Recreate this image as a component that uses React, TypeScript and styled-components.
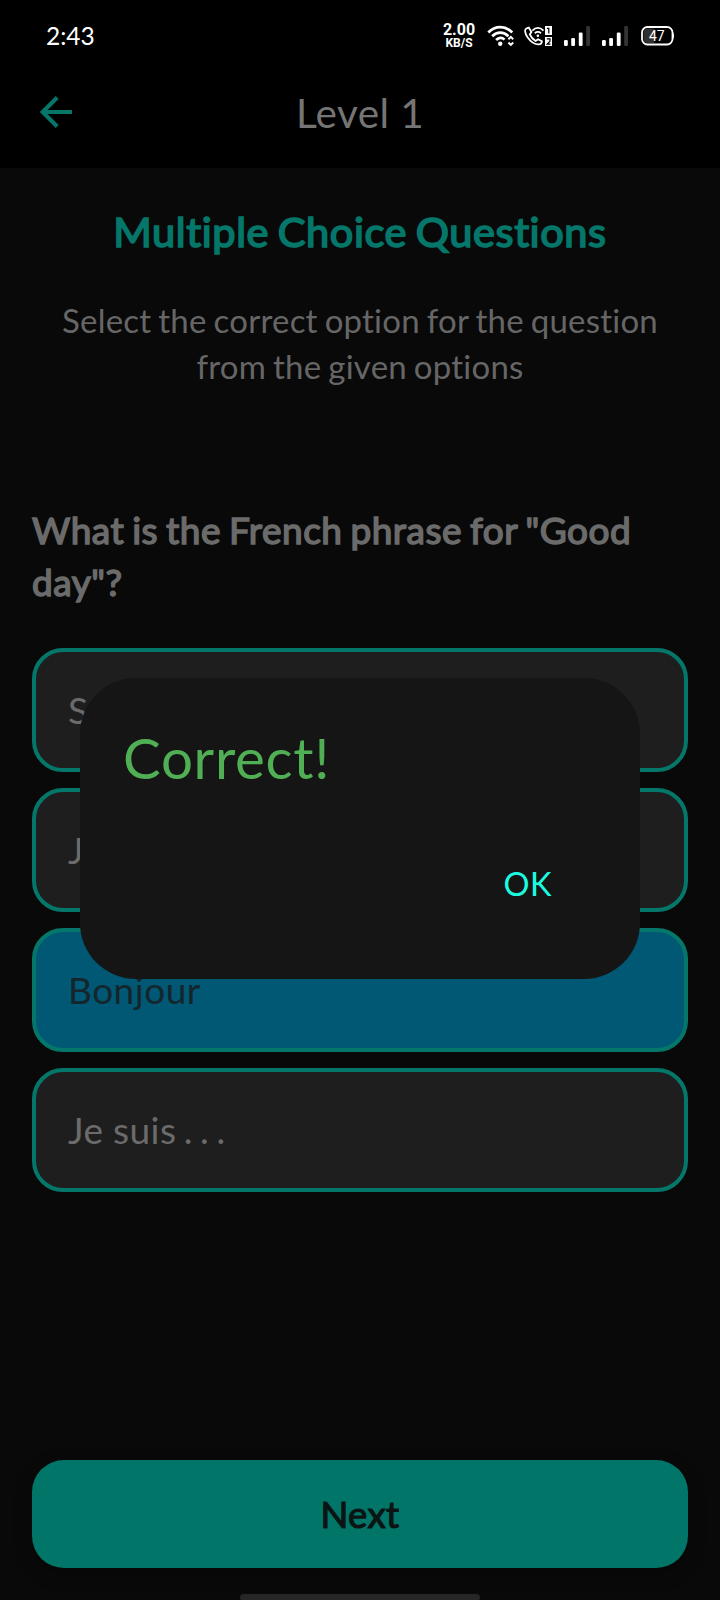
import React from 'react';
import styled, { createGlobalStyle } from 'styled-components';

const GlobalStyle = createGlobalStyle`
  *, *::before, *::after { box-sizing: border-box; }
  body { margin: 0; background: #090909; }
`;

const Screen = styled.div`
  position: relative;
  display: flex;
  flex-direction: column;
  width: 720px;
  height: 1600px;
  overflow: hidden;
  background: #090909;
  font-family: Lato, sans-serif;
  font-variant-ligatures: none;
`;

const StatusBar = styled.header`
  display: flex;
  align-items: center;
  justify-content: space-between;
  height: 72px;
  padding: 0 45px 0 46px;
  background: #000;
  color: #fff;
`;

const Clock = styled.time`
  font-size: 24.5px;
  line-height: 30px;
`;

const StatusIcons = styled.div`
  display: flex;
  align-items: center;
  height: 30px;

  svg { display: block; flex: none; }
`;

const NetSpeed = styled.div`
  display: flex;
  flex-direction: column;
  align-items: center;
  width: 34px;
  margin-right: 11px;
  font-family: Roboto, sans-serif;
  font-weight: 700;
`;

const SpeedValue = styled.span`
  font-size: 16px;
  line-height: 14px;
`;

const SpeedUnit = styled.span`
  font-size: 12px;
  line-height: 12px;
`;

const AppBar = styled.nav`
  display: grid;
  grid-template-columns: 72px 1fr 72px;
  align-items: center;
  height: 96px;
  padding-bottom: 16px;
  background: #000;
`;

const BackButton = styled.button`
  display: flex;
  padding: 0 0 0 40px;
  border: 0;
  background: none;
`;

const BarTitle = styled.h1`
  margin: 0;
  padding-top: 2px;
  text-align: center;
  font-size: 40.5px;
  font-weight: 400;
  line-height: 48px;
  letter-spacing: 0.4px;
  color: #757575;
`;

const Content = styled.main`
  display: flex;
  flex: 1;
  flex-direction: column;
  padding: 39px 32px 32px;
`;

const Title = styled.h2`
  margin: 0;
  text-align: center;
  font-size: 41.5px;
  font-weight: 400;
  line-height: 48px;
  letter-spacing: 0.6px;
  word-spacing: -2.5px;
  color: #04776a;
  -webkit-text-stroke: 1.7px #04776a;
`;

const Intro = styled.p`
  margin: 42px 0 0;
  text-align: center;
  font-size: 33px;
  line-height: 46px;
  letter-spacing: 0.22px;
  word-spacing: -1.7px;
  color: #666;
`;

const Question = styled.h3`
  margin: 115px 0 0;
  font-size: 37px;
  font-weight: 400;
  line-height: 52px;
  letter-spacing: 0.5px;
  word-spacing: -2px;
  color: #6b6b6b;
  -webkit-text-stroke: 1.5px #6b6b6b;
`;

const Options = styled.div`
  display: flex;
  flex-direction: column;
  gap: 16px;
  margin-top: 40px;
`;

const Option = styled.button<{ $selected?: boolean }>`
  display: flex;
  align-items: center;
  height: 124px;
  padding: 0 32px;
  border: 4px solid #04776a;
  border-radius: 31px;
  background: ${(p) => (p.$selected ? '#005874' : '#1e1e1e')};
  color: ${(p) => (p.$selected ? '#14262c' : '#6b6b6b')};
  font-family: inherit;
  font-size: 37px;
  line-height: 44px;
  letter-spacing: 0.5px;
  word-spacing: -0.5px;
  white-space: pre;
`;

const Ellipsis = styled.span`
  word-spacing: -2.8px;
`;

const NextButton = styled.button`
  height: 108px;
  margin-top: auto;
  border: 0;
  border-radius: 32px;
  background: #017668;
  box-shadow: 0 6px 18px rgba(0, 0, 0, 0.25);
  color: #0b1413;
  font-family: inherit;
  font-size: 36.5px;
  line-height: 44px;
  letter-spacing: 0.4px;
  -webkit-text-stroke: 1.2px #0b1413;
`;

const HomeIndicator = styled.div`
  position: absolute;
  bottom: 0;
  left: 240px;
  width: 240px;
  height: 6px;
  border-radius: 4px 4px 2px 2px;
  background: #262626;
`;

const Overlay = styled.div`
  position: absolute;
  inset: 56px 0 0;
  display: flex;
  align-items: center;
  justify-content: center;
`;

const Dialog = styled.section`
  display: flex;
  flex-direction: column;
  justify-content: space-between;
  width: 560px;
  height: 301px;
  padding: 45px 72px 73px 43px;
  border-radius: 56px;
  background: #151515;
`;

const DialogTitle = styled.h2`
  margin: 0;
  font-size: 56.5px;
  font-weight: 400;
  line-height: 68px;
  letter-spacing: 0.7px;
  color: #50af54;
`;

const DialogAction = styled.button`
  align-self: flex-end;
  padding: 0 16px;
  border: 0;
  background: none;
  color: #1cfbe0;
  font-family: inherit;
  font-size: 32.5px;
  line-height: 44px;
  letter-spacing: 0.5px;
`;

const WifiIcon = () => (
  <svg width="28" height="22" viewBox="0 0 28 22" fill="none" stroke="#fff" strokeWidth="2.7">
    <path d="M1.3 7.5C8.2 .2 18.3 .2 25.2 7.5M5.2 11.3c4.8-4.8 11.4-4.8 16.2 0M9.1 15c2.7-2.7 6-2.7 8.4-.4" />
    <circle cx="13.2" cy="18.7" r="2.2" fill="#fff" stroke="none" />
    <path d="M21.4 14.3l2.4-2.4 2.4 2.4M21.4 17.5l2.4 2.4 2.4-2.4" strokeWidth="2" />
  </svg>
);

const CallWifiIcon = () => (
  <svg width="28" height="20" viewBox="0 0 28 20" fill="none" stroke="#fff" strokeWidth="1.8">
    <path d="M4.8 1.6L2.6 2.3C.2 3 .9 7.5 3.5 11.2c3.2 4.5 7.4 7.3 11.2 7.2 2 0 3.1-1.4 3.2-3.2l-3.8-2-2.5 1.8c-2.7-1.7-4.7-3.900-5.800-6.600l1.600-2.400z" />
    <path d="M8.300 4.600c3.600-3.500 7.600-3.500 11.200 0M10.800 7.200c2.100-1.700 4.100-1.700 6.200 0" />
    <circle cx="13.9" cy="9.7" r="1.3" fill="#fff" stroke="none" />
    <path d="M21 0h7v9h-7zM21 11h7v9h-7z" fill="#fff" stroke="none" />
    <path d="M23 2.400h1.800v5M22.800 12.800h3.200v2.400l-2.800 3h3.300" stroke="#000" strokeWidth="1.2" />
  </svg>
);

const SignalIcon = () => (
  <svg width="26" height="20" viewBox="0 0 26 20" fill="#fff">
    <rect y="14" width="3.8" height="6" rx="1.3" />
    <rect x="7.2" y="12" width="3.8" height="8" rx="1.3" />
    <rect x="14.8" y="6.5" width="3.8" height="13.5" rx="1.3" />
    <rect x="22.2" width="3.8" height="20" rx="1.3" fill="#333" />
  </svg>
);

const BatteryIcon = () => (
  <svg width="34" height="20" viewBox="0 0 34 20">
    <rect x="1" y="1" width="30.5" height="17.5" rx="5.5" fill="#000" stroke="#fff" strokeWidth="1.8" />
    <path d="M7 2.500h6v14.500H7q-4.500 0-4.500-4.500v-5.500q0-4.500 4.500-4.500z" fill="#303030" />
    <path d="M32 6q2 3.750 0 7.500z" fill="#fff" />
    <text x="15.8" y="14.7" textAnchor="middle" fill="#fff" fontFamily="Roboto, sans-serif" fontSize="14">47</text>
  </svg>
);

const BackIcon = () => (
  <svg width="32" height="32" viewBox="0 0 32 32" fill="none" stroke="#04776a" strokeWidth="4">
    <path d="M32 16H3M17.2 1.5L2.7 16l14.5 14.5" />
  </svg>
);

const Gap = styled.span<{ $w: number }>`
  width: ${(p) => p.$w}px;
`;

const options = [
  { label: 'Salut' },
  { label: "J'ai" },
  { label: 'Bonjour', selected: true },
  { label: 'Je suis', trail: ' . . .' },
];

export default function App() {
  return (
    <>
      <GlobalStyle />
      <Screen>
        <StatusBar>
          <Clock>2:43</Clock>
          <StatusIcons>
            <NetSpeed>
              <SpeedValue>2.00</SpeedValue>
              <SpeedUnit>KB/S</SpeedUnit>
            </NetSpeed>
            <WifiIcon />
            <Gap $w={9} />
            <CallWifiIcon />
            <Gap $w={12} />
            <SignalIcon />
            <Gap $w={12} />
            <SignalIcon />
            <Gap $w={13} />
            <BatteryIcon />
          </StatusIcons>
        </StatusBar>
        <AppBar>
          <BackButton aria-label="Back"><BackIcon /></BackButton>
          <BarTitle>Level 1</BarTitle>
        </AppBar>
        <Content>
          <Title>Multiple Choice Questions</Title>
          <Intro>Select the correct option for the question<br />from the given options</Intro>
          <Question>What is the French phrase for "Good<br />day"?</Question>
          <Options>
            {options.map((o) => (
              <Option key={o.label} $selected={o.selected}>
                {o.label}
                {o.trail && <Ellipsis>{o.trail}</Ellipsis>}
              </Option>
            ))}
          </Options>
          <NextButton>Next</NextButton>
        </Content>
        <Overlay>
          <Dialog role="dialog">
            <DialogTitle>Correct!</DialogTitle>
            <DialogAction>OK</DialogAction>
          </Dialog>
        </Overlay>
        <HomeIndicator />
      </Screen>
    </>
  );
}
